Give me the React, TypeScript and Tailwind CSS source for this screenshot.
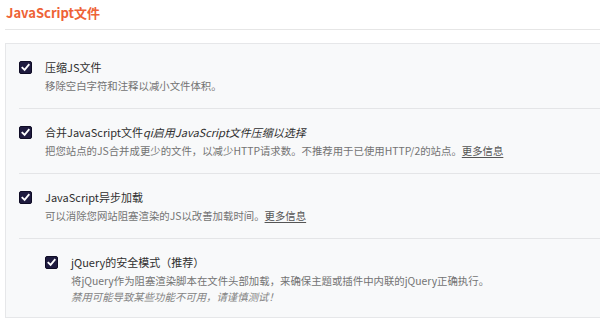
import React from "react";

const font = { fontFamily: '"Noto Sans CJK SC", "Noto Sans", sans-serif' };

function Check() {
  return (
    <span className="mt-[2px] flex h-[13px] w-[13px] shrink-0 items-center justify-center rounded-[2px] bg-[#1f1b3f] border border-[#0f0c25]">
      <svg width="9" height="9" viewBox="0 0 10 10" fill="none">
        <path d="M1.5 5.2 L4 7.6 L8.6 2" stroke="#ffffff" strokeWidth="2" strokeLinecap="square" />
      </svg>
    </span>
  );
}

function Row({
  label,
  children,
  last,
  indent,
}: {
  label: React.ReactNode;
  children: React.ReactNode;
  last?: boolean;
  indent?: boolean;
}) {
  return (
    <div
      className={`flex pt-[15px] ${last ? "pb-[13px]" : "pb-[14px] border-b border-[#e4e5e7]"} ${
        indent ? "pl-[26px]" : ""
      }`}
    >
      <Check />
      <div className="ml-[13px] flex flex-col">
        <div className="text-[11px] leading-[16px] text-[#2f2f2f]">{label}</div>
        <div className="mt-[3px] text-[10.4px] leading-[16px] text-[#737373]">{children}</div>
      </div>
    </div>
  );
}

const Link = ({ children }: { children: React.ReactNode }) => (
  <span className="text-[#555] underline underline-offset-2">{children}</span>
);

export default function App() {
  return (
    <div className="h-[330px] w-[600px] overflow-hidden bg-white pl-[5px] pt-[3px]" style={font}>
      <h2 className="pl-[1px] text-[13px] font-bold leading-[20px] text-[#ee6236]">JavaScript文件</h2>
      <div className="mt-[6px] border-t border-[#e6e6e6]" />
      <div className="mt-[13px] w-[640px] border border-r-0 border-[#e6e7e9] bg-[#f8f9fa] pl-[13px]">
        <Row label="压缩JS文件">移除空白字符和注释以减小文件体积。</Row>
        <Row
          label={
            <>
              合并JavaScript文件<span className="italic">qi启用JavaScript文件压缩以选择</span>
            </>
          }
        >
          把您站点的JS合并成更少的文件，以减少HTTP请求数。不推荐用于已使用HTTP/2的站点。<Link>更多信息</Link>
        </Row>
        <Row label="JavaScript异步加载">
          可以消除您网站阻塞渲染的JS以改善加载时间。<Link>更多信息</Link>
        </Row>
        <Row label="jQuery的安全模式（推荐）" last indent>
          <span className="block leading-[15px]">将jQuery作为阻塞渲染脚本在文件头部加载，来确保主题或插件中内联的jQuery正确执行。</span>
          <span className="mt-[1px] block italic leading-[15px] text-[#848484]">禁用可能导致某些功能不可用，请谨慎测试！</span>
        </Row>
      </div>
    </div>
  );
}
